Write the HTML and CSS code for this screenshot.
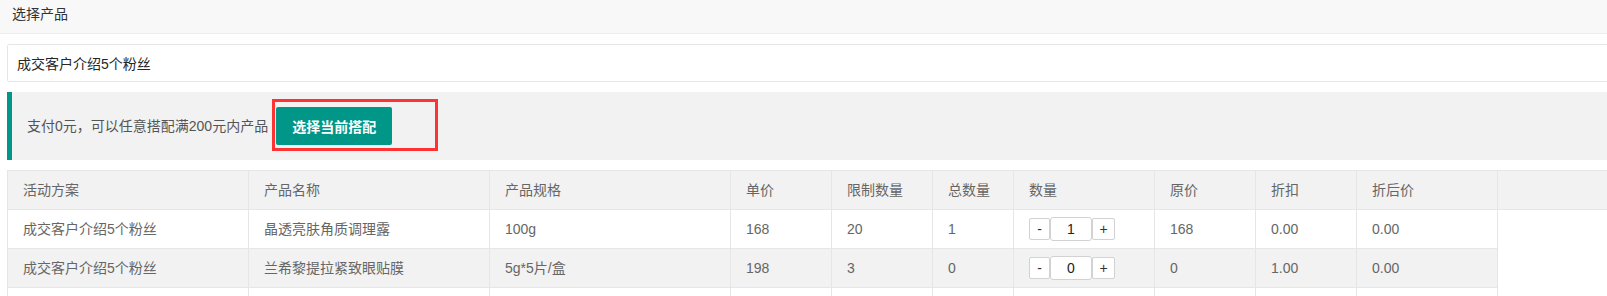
FILE: index.html
```html
<!DOCTYPE html>
<html lang="zh-CN">
<head>
    <title>选择产品</title>
    <meta charset="UTF-8">
    <link rel="stylesheet" href="styles.css">
</head>
<body>
<div class="card">
    <div class="card-header">选择产品</div>
    <div class="card-body">
        <input type="text" class="input" value="成交客户介绍5个粉丝">

        <div class="quote">
            <span>支付0元，可以任意搭配满200元内产品</span>
            <button type="button" class="btn">选择当前搭配</button>
            <div class="mark"></div>
        </div>

        <table class="table">
            <colgroup>
                <col class="w240">
                <col class="w240">
                <col class="w240">
                <col class="w100">
                <col class="w100">
                <col class="w80">
                <col class="w140">
                <col class="w100">
                <col class="w100">
                <col class="w140">
                <col class="w200">
            </colgroup>
            <thead>
            <tr>
                <th>活动方案</th>
                <th>产品名称</th>
                <th>产品规格</th>
                <th>单价</th>
                <th>限制数量</th>
                <th>总数量</th>
                <th>数量</th>
                <th>原价</th>
                <th>折扣</th>
                <th>折后价</th>
                <th></th>
            </tr>
            </thead>
            <tbody>
            <tr>
                <td>成交客户介绍5个粉丝</td>
                <td>晶透亮肤角质调理露</td>
                <td>100g</td>
                <td>168</td>
                <td>20</td>
                <td>1</td>
                <td>
                    <div class="qty">
                        <button type="button" class="qty-btn">-</button>
                        <input type="text" class="qty-input" value="1">
                        <button type="button" class="qty-btn plus">+</button>
                    </div>
                </td>
                <td>168</td>
                <td>0.00</td>
                <td>0.00</td>
            </tr>
            <tr class="even">
                <td>成交客户介绍5个粉丝</td>
                <td>兰希黎提拉紧致眼贴膜</td>
                <td>5g*5片/盒</td>
                <td>198</td>
                <td>3</td>
                <td>0</td>
                <td>
                    <div class="qty">
                        <button type="button" class="qty-btn">-</button>
                        <input type="text" class="qty-input" value="0">
                        <button type="button" class="qty-btn plus">+</button>
                    </div>
                </td>
                <td>0</td>
                <td>1.00</td>
                <td>0.00</td>
            </tr>
            <tr class="blank">
                <td></td>
                <td></td>
                <td></td>
                <td></td>
                <td></td>
                <td></td>
                <td></td>
                <td></td>
                <td></td>
                <td></td>
            </tr>
            </tbody>
        </table>
    </div>
</div>
</body>
</html>
```

FILE: styles.css
```css
html, body {
    margin: 0;
    overflow: hidden;
    background-color: #fff;
    font-family: "Liberation Sans", "Noto Sans CJK SC", sans-serif;
    font-size: 14px;
}

.card {
    width: 1700px;
}

.card-header {
    height: 33px;
    line-height: 28px;
    padding-left: 12px;
    background-color: #f8f8f8;
    border-bottom: 1px solid #eee;
    color: #333;
}

.card-body {
    padding: 10px 0 0 7px;
}

.input {
    display: block;
    box-sizing: border-box;
    width: 1680px;
    height: 38px;
    margin: 0;
    padding: 0 9px;
    border: 1px solid #e6e6e6;
    border-radius: 2px;
    font: 14px "Liberation Sans", "Noto Sans CJK SC", sans-serif;
    color: #262626;
    outline: none;
}

.quote {
    position: relative;
    display: flex;
    align-items: center;
    margin-top: 10px;
    padding: 15px 15px 15px 15px;
    border-left: 5px solid #009688;
    background-color: #f2f2f2;
    color: #555;
    line-height: 20px;
}

.btn {
    height: 38px;
    margin-left: 8px;
    padding: 0 16px;
    border: none;
    border-radius: 2px;
    background-color: #009688;
    color: #fff;
    font: bold 14px "Liberation Sans", "Noto Sans CJK SC", sans-serif;
    cursor: pointer;
}

.mark {
    position: absolute;
    left: 260px;
    top: 7px;
    width: 160px;
    height: 46px;
    border: 3px solid #f33;
}

.table {
    margin-top: 10px;
    border-collapse: collapse;
    table-layout: fixed;
    color: #666;
    line-height: 20px;
}

.w240 { width: 241px; }
.w140 { width: 141px; }
.w100 { width: 101px; }
.w80 { width: 81px; }
.w200 { width: 200px; }

.table th,
.table td {
    padding: 9px 15px;
    border: 1px solid #e6e6e6;
    text-align: left;
    font-weight: normal;
    white-space: nowrap;
}

.table thead tr,
.table tr.even {
    background-color: #f2f2f2;
}

.table tr.blank td {
    height: 20px;
}

.qty {
    display: flex;
    align-items: center;
    height: 24px;
    margin: -2px 0;
}

.qty-btn {
    box-sizing: border-box;
    width: 21px;
    height: 22px;
    padding: 0;
    border: 1px solid #d2d2d2;
    border-radius: 2px;
    background-color: #fff;
    color: #333;
    font: 14px "Liberation Sans", sans-serif;
}

.qty-btn.plus {
    width: 23px;
}

.qty-input {
    box-sizing: border-box;
    width: 42px;
    height: 24px;
    padding: 0;
    border: 1px solid #d2d2d2;
    border-radius: 3px;
    text-align: center;
    color: #222;
    font: 14px "Liberation Sans", sans-serif;
    outline: none;
}
```
